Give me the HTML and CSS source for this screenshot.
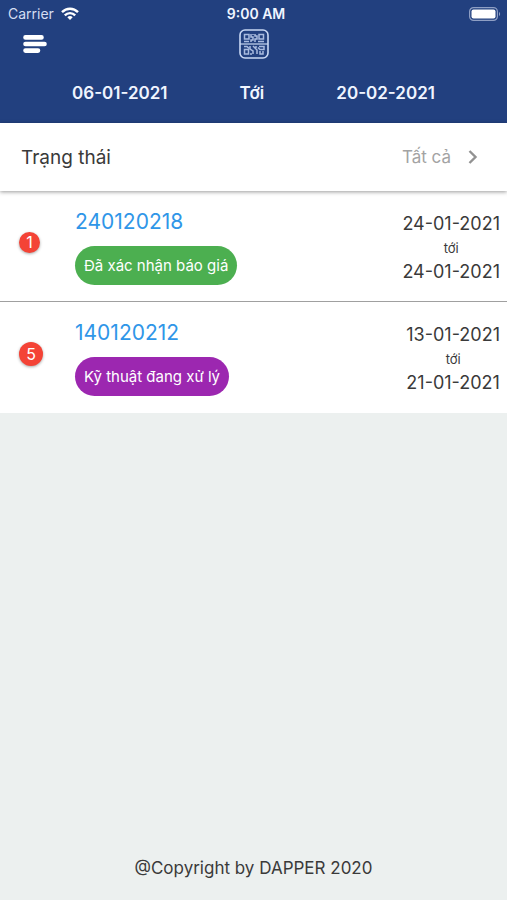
FILE: index.html
```html
<!DOCTYPE html>
<html lang="vi">
<head>
<meta charset="utf-8">
<meta name="viewport" content="width=device-width, initial-scale=1">
<title>DAPPER</title>
<link rel="stylesheet" href="styles.css">
</head>
<body>
<header class="header">
  <div class="status">
    <div class="carrier">
      <span>Carrier</span>
      <svg width="18" height="14" viewBox="0 0 18 14" fill="none" stroke="#fff" stroke-width="2.400" aria-hidden="true">
        <path d="M1 5.200C5.500.6 12.500.6 17 5.200"/>
        <path d="M3.800 8.300c2.900-2.900 7.500-2.900 10.400 0"/>
        <path d="M9 13 6.300 10.300a3.900 3.900 0 0 1 5.400 0z" fill="#fff" stroke="none"/>
      </svg>
    </div>
    <span class="clock">9:00 AM</span>
    <svg class="battery" width="32" height="14" viewBox="0 0 32 14" fill="none" aria-hidden="true">
      <rect x=".6" y=".6" width="27.800" height="12.800" rx="4" stroke="#8f9fc4" stroke-width="1.200"/>
      <rect x="2.500" y="2.500" width="24" height="9" rx="2" fill="#fff"/>
      <path d="M30 5v4c1.500-.5 1.500-3.500 0-4z" fill="#8f9fc4"/>
    </svg>
  </div>
  <div class="toolbar">
    <button class="icon-button" type="button" aria-label="Menu">
      <svg width="24" height="18" viewBox="0 0 24 18" stroke="#fff" stroke-width="4.600" stroke-linecap="round" aria-hidden="true">
        <path d="M2.500 2.400h16M2.500 9h19M2.500 15.600h12.500"/>
      </svg>
    </button>
    <button class="icon-button" type="button" aria-label="QR">
      <svg width="30" height="30" viewBox="0 0 30 30" fill="none" stroke="#c9d8f4" aria-hidden="true">
        <rect x="1" y="1" width="28" height="28" rx="5" stroke-width="1.600"/>
        <path d="M1 15h28" stroke-width="1.200"/>
        <g stroke-width="1.500" stroke="#a9bbe0">
          <path d="M5.500 5.500h4.500v4.500H5.500zM20 5.500h4.500v4.500H20zM5.500 20.500h4v4.500h-4z"/>
          <path d="M12 5v3h2v3h-2v2M16 5v2h2v3h-2v3M5 12.500h5M19 12.500h6M14 5v1"/>
          <path d="M5 17.500h3l2 2M11 17v3l3 2v3M14 17l4 4v4M20 17.500h5v3h-4l-2-2M24 22v3h-3v-3M11 25h2M16 18h2"/>
        </g>
      </svg>
    </button>
  </div>
  <div class="range">
    <button class="range-date" type="button">06-01-2021</button>
    <span>Tới</span>
    <button class="range-date" type="button">20-02-2021</button>
  </div>
</header>
<button class="filter" type="button">
  <span class="filter-label">Trạng thái</span>
  <span class="filter-value">Tất cả</span>
  <svg width="10" height="16" viewBox="0 0 10 16" fill="none" stroke="#929292" stroke-width="2.400" aria-hidden="true"><path d="m1.500 2 6 6-6 6"/></svg>
</button>
<main class="orders">
  <article class="order">
    <div class="count-cell"><span class="count">1</span></div>
    <div class="info">
      <a class="number" href="#">240120218</a>
      <span class="tag tag-confirmed">Đã xác nhận báo giá</span>
    </div>
    <div class="dates"><span>24-01-2021</span><small>tới</small><span>24-01-2021</span></div>
  </article>
  <article class="order">
    <div class="count-cell"><span class="count count-large">5</span></div>
    <div class="info">
      <a class="number" href="#">140120212</a>
      <span class="tag tag-processing">Kỹ thuật đang xử lý</span>
    </div>
    <div class="dates"><span>13-01-2021</span><small>tới</small><span>21-01-2021</span></div>
  </article>
</main>
<footer class="footer">@Copyright by DAPPER 2020</footer>
</body>
</html>
```
FILE: styles.css
```css
* {
  box-sizing: border-box;
}

body {
  margin: 0;
  min-height: 100vh;
  display: flex;
  flex-direction: column;
  background: #ecf0ef;
  color: #3a3a3a;
  font-family: Inter, "Liberation Sans", sans-serif;
}

button {
  margin: 0;
  padding: 0;
  border: 0;
  background: none;
  color: inherit;
  font: inherit;
}

svg {
  display: block;
}

.header {
  background: #22407f;
  color: #f0f5ff;
}

.status {
  display: grid;
  grid-template-columns: 1fr auto 1fr;
  align-items: center;
  height: 27px;
  padding: 0 6px 0 8px;
  font-size: 14px;
}

.carrier {
  display: flex;
  align-items: center;
  gap: 7px;
  color: #d5def2;
}

.clock {
  padding-left: 3px;
  font-weight: 600;
}

.battery {
  justify-self: end;
}

.toolbar {
  display: grid;
  grid-template-columns: 1fr auto 1fr;
  align-items: center;
  height: 33px;
  padding: 0 23px;
}

.icon-button {
  justify-self: start;
}

.range {
  display: flex;
  justify-content: space-evenly;
  align-items: center;
  height: 63px;
  padding-top: 2px;
  font-size: 17px;
  font-weight: 600;
}

.filter {
  position: relative;
  display: flex;
  align-items: center;
  height: 68px;
  padding: 0 29px 0 21px;
  background: #fff;
  box-shadow: 0 1px 4px rgba(0, 0, 0, 0.4);
  text-align: left;
}

.filter-label {
  flex: 1;
  font-size: 19px;
}

.filter-value {
  margin-right: 17px;
  color: #a3a3a3;
  font-size: 17px;
}

.orders {
  background: #fff;
}

.order {
  display: grid;
  grid-template-columns: 56px 1fr auto;
  align-items: center;
  height: 111px;
  padding: 1px 7px 0 19px;
}

.order:not(:last-child) {
  border-bottom: 1px solid #a0a0a0;
}

.count {
  display: flex;
  align-items: center;
  justify-content: center;
  width: 21px;
  height: 21px;
  border-radius: 50%;
  background: #f44336;
  box-shadow: 0 1px 3px rgba(0, 0, 0, 0.35);
  color: #fff;
  font-size: 16px;
}

.count-cell {
  padding-bottom: 9px;
}

.count-large {
  width: 24px;
  height: 24px;
}

.info {
  display: flex;
  flex-direction: column;
  align-items: flex-start;
  gap: 11px;
}

.number {
  color: #2f96e8;
  font-size: 21px;
  line-height: 26px;
  text-decoration: none;
}

.tag {
  padding: 0 9px;
  border-radius: 20px;
  color: #fff;
  font-size: 15px;
  line-height: 39px;
}

.tag-confirmed {
  background: #4caf50;
}

.tag-processing {
  background: #9c27b0;
}

.dates {
  display: flex;
  flex-direction: column;
  align-items: center;
  padding-top: 2px;
  font-size: 18px;
  line-height: 24px;
}

.dates small {
  font-size: 13px;
}

.footer {
  margin-top: auto;
  padding: 20px;
  font-size: 17px;
  line-height: 24px;
  text-align: center;
}
```
